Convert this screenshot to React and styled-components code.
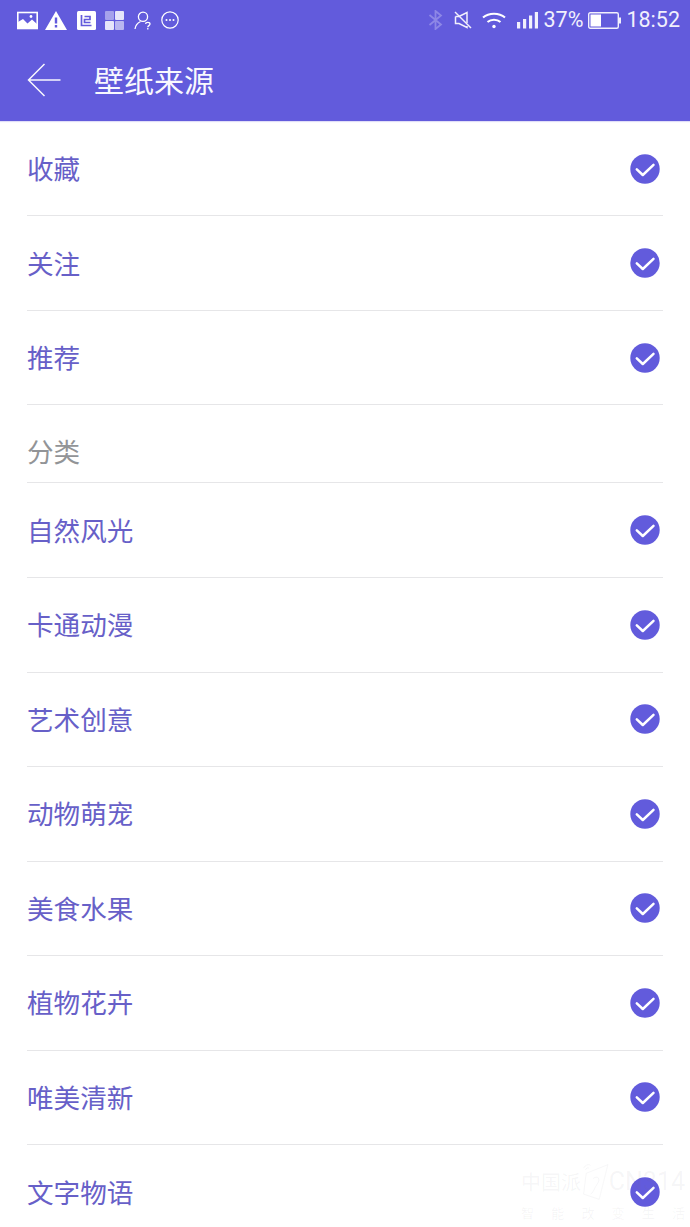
import React from "react";
import styled, { createGlobalStyle } from "styled-components";

const Global = createGlobalStyle`
  html, body { margin: 0; padding: 0; background: #fff; }
  body { font-family: "Roboto", "Noto Sans CJK SC", sans-serif; }
  #root { width: 690px; height: 1227px; overflow: hidden; }
`;
const Page = styled.div`
  position: relative;
  width: 690px;
  height: 1227px;
  overflow: hidden;
  background: #fff;
`;
const Top = styled.header`
  background: #625bdc;
  height: 121px;
  box-shadow: 0 1px 1px rgba(98, 91, 220, 0.2);
  display: flex;
  flex-direction: column;
`;
const StatusBar = styled.div`
  height: 40px;
  display: flex;
  align-items: center;
  justify-content: space-between;
  padding: 0 10px 0 17px;
  color: #fff;
`;
const StatusGroup = styled.div`
  display: flex;
  align-items: center;
  gap: ${(p) => p.$gap}px;
`;
const LeadIcon = styled.span`
  display: flex;
  margin-right: -2.5px;
`;
const NetworkIcons = styled.div`
  display: flex;
  align-items: center;
  gap: 10.5px;
  margin-right: 1px;
`;
const StatusText = styled.span`
  font-family: "Roboto", sans-serif;
  font-size: ${(p) => p.$size}px;
  line-height: 20px;
  color: #f1f0fc;
`;
const Toolbar = styled.div`
  flex: 1;
  display: flex;
  align-items: center;
  padding: 0 0 2px 27px;
  gap: 33px;
`;
const Title = styled.h1`
  margin: 0 0 2px;
  font-family: "Noto Sans CJK SC", sans-serif;
  font-size: 30px;
  font-weight: 400;
  line-height: 40px;
  color: #f8f8fe;
  letter-spacing: 0;
`;
const List = styled.div`
  padding: 0.8px 27px 0;
`;
const Row = styled.div`
  height: 94.55px;
  box-sizing: border-box;
  display: flex;
  align-items: center;
  justify-content: space-between;
  border-bottom: 1px solid #e6e6e8;
  padding-right: 3px;
`;
const RowLabel = styled.span`
  font-family: "Noto Sans CJK SC", sans-serif;
  font-size: 26.6px;
  font-weight: 400;
  color: #6760c8;
  margin-bottom: 2px;
`;
const Section = styled.div`
  height: 78px;
  box-sizing: border-box;
  display: flex;
  align-items: center;
  padding-top: 14px;
  border-bottom: 1px solid #e6e6e8;
`;
const SectionLabel = styled.span`
  font-family: "Noto Sans CJK SC", sans-serif;
  font-size: 26.6px;
  font-weight: 400;
  color: #929497;
`;
const Watermark = styled.div`
  position: absolute;
  left: 521px;
  top: 1160px;
  width: 164px;
  color: rgba(120, 120, 130, 0.07);
  font-family: "Noto Sans CJK SC", sans-serif;
  pointer-events: none;
`;
const WatermarkTop = styled.div`
  display: flex;
  align-items: center;
  font-size: 20px;
  line-height: 26px;
  white-space: nowrap;
  justify-content: space-between;
`;
const WatermarkCode = styled.span`
  font-family: "Roboto", sans-serif;
  font-size: 25px;
`;
const WatermarkBottom = styled.div`
  margin-top: 1px;
  font-size: 13px;
  line-height: 16px;
  display: flex;
  justify-content: space-between;
`;

const Check = () => (
  <svg width="30" height="30" viewBox="0 0 30 30">
    <circle cx="15" cy="15" r="14.7" fill="#625bdc" />
    <path d="M6.8 15.3 L12.8 21 L23.5 10.8" fill="none" stroke="#fff" strokeWidth="2.5" strokeLinecap="round" strokeLinejoin="round" />
  </svg>
);
const Back = () => (
  <svg width="34" height="34" viewBox="0 0 34 34">
    <path d="M17.5 1 L1.5 17 L17.5 33 M1.5 17 H33.5" fill="none" stroke="#f8f8fe" strokeWidth="1.5" />
  </svg>
);
const ImageIcon = () => (
  <svg width="21" height="19" viewBox="0 0 21 19">
    <rect x="0.8" y="1.5" width="19.4" height="16" fill="none" stroke="#fff" strokeWidth="1.6" />
    <path d="M1 17 V11 L6 8 L10.5 12.5 L15 8.5 L20 13 V17 Z" fill="#fff" />
    <circle cx="14" cy="5.5" r="1.4" fill="#fff" />
  </svg>
);
const Warn = () => (
  <svg width="22" height="19" viewBox="0 0 22 19">
    <path fillRule="evenodd" d="M11 0 L22 19 H0 Z M9.8 6.5 V12.5 H12.2 V6.5 Z M9.8 14 V16.4 H12.2 V14 Z" fill="#fff" />
  </svg>
);
const LIcon = () => (
  <svg width="19" height="19" viewBox="0 0 19 19">
    <rect width="19" height="19" rx="1.5" fill="#fff" />
    <path d="M4.5 4 V14.5 H14.5 M7.5 5.5 H13 V8.5 H7.5 V11.5 H13.5" fill="none" stroke="#625bdc" strokeWidth="1.7" />
  </svg>
);
const Tiles = () => (
  <svg width="19" height="19" viewBox="0 0 19 19">
    <rect x="0" y="0" width="9" height="9" rx="1" fill="#a5a1ec" />
    <rect x="10" y="0" width="9" height="9" rx="1" fill="#e6e5fa" />
    <rect x="0" y="10" width="9" height="9" rx="1" fill="#e6e5fa" />
    <rect x="10" y="10" width="9" height="9" rx="1" fill="#b9b6f0" />
  </svg>
);
const Person = () => (
  <svg width="18" height="19" viewBox="0 0 18 19" fill="none" stroke="#fff" strokeWidth="1.3">
    <circle cx="9" cy="5.8" r="4.6" />
    <path d="M1 18 C1.5 14 3.5 12 6.5 10.5" />
    <path d="M11.5 12.8 C11.8 10.8 16 10.8 16 13 C16 14.6 13.8 14.6 13.8 16.2" />
    <path d="M13.8 17 V18.6" />
  </svg>
);
const Dots = () => (
  <svg width="18" height="18" viewBox="0 0 18 18">
    <circle cx="9" cy="9" r="8.2" fill="none" stroke="#fff" strokeWidth="1.2" />
    <circle cx="5.5" cy="9" r="1" fill="#fff" />
    <circle cx="9" cy="9" r="1" fill="#fff" />
    <circle cx="12.5" cy="9" r="1" fill="#fff" />
  </svg>
);
const Bluetooth = () => (
  <svg width="15" height="20" viewBox="0 0 15 20">
    <path d="M1.5 5 L13 14.5 L7.5 19 V1 L13 5.5 L1.5 15" fill="none" stroke="#8d87e6" strokeWidth="1.8" />
  </svg>
);
const Mute = () => (
  <svg width="18" height="18" viewBox="0 0 18 18" fill="none" stroke="#f1f0fc" strokeWidth="1.5">
    <path d="M1.5 5.5 H5 L13 1.5 V12" />
    <path d="M1.5 5.5 V12.5 H5 L13 16.5 V15" />
    <path d="M1 1 L17 17" />
  </svg>
);
const Wifi = () => (
  <svg width="24" height="17" viewBox="0 0 24 17" fill="none" stroke="#fff" strokeWidth="2.1">
    <path d="M1 5.5 C7 0.5 17 0.5 23 5.5" />
    <path d="M5.5 10 C9 7 15 7 18.5 10" />
    <circle cx="12" cy="14.5" r="1.7" fill="#fff" stroke="none" />
  </svg>
);
const Signal = () => (
  <svg width="21" height="17" viewBox="0 0 21 17" fill="#f1f0fc">
    <rect x="0" y="10" width="3.2" height="6.5" />
    <rect x="6" y="7" width="3.2" height="9.5" />
    <rect x="12" y="3.5" width="3.2" height="13" />
    <rect x="17.8" y="0" width="3.2" height="16.5" />
  </svg>
);
const Battery = () => (
  <svg width="33" height="17" viewBox="0 0 33 17">
    <rect x="0.7" y="0.7" width="29.6" height="15.6" rx="1.5" fill="none" stroke="#f1f0fc" strokeWidth="1.4" />
    <rect x="2.5" y="2.5" width="10.5" height="12" fill="#fff" />
    <rect x="31" y="5.5" width="2" height="6" fill="#f1f0fc" />
  </svg>
);
const WatermarkLogo = () => (
  <svg width="32" height="44" viewBox="0 0 32 44" fill="none" stroke="currentColor" strokeWidth="1">
    <path d="M6 12 L31 2 L21 42 L3 36 Z" />
    <path d="M14 18 C19 14 23 18 19 24 C15 29 15 34 11 36" />
    <path d="M3 6 C5 2 9 1 11 3 M5 8 C6 6 8 5 9 6" />
  </svg>
);

const top3 = ["收藏", "关注", "推荐"];
const cats = ["自然风光", "卡通动漫", "艺术创意", "动物萌宠", "美食水果", "植物花卉", "唯美清新", "文字物语"];

export default function App() {
  return (
    <Page>
      <Global />
      <Top>
        <StatusBar>
          <StatusGroup $gap={9.5}>
            <LeadIcon>
              <ImageIcon />
            </LeadIcon>
            <Warn />
            <LIcon />
            <Tiles />
            <Person />
            <Dots />
          </StatusGroup>
          <StatusGroup $gap={5}>
            <NetworkIcons>
              <Bluetooth />
              <Mute />
              <Wifi />
              <Signal />
            </NetworkIcons>
            <StatusText $size={21.5}>37%</StatusText>
            <Battery />
            <StatusText $size={21.5}>18:52</StatusText>
          </StatusGroup>
        </StatusBar>
        <Toolbar>
          <Back />
          <Title>壁纸来源</Title>
        </Toolbar>
      </Top>
      <List>
        {top3.map((t) => (
          <Row key={t}>
            <RowLabel>{t}</RowLabel>
            <Check />
          </Row>
        ))}
        <Section>
          <SectionLabel>分类</SectionLabel>
        </Section>
        {cats.map((t) => (
          <Row key={t}>
            <RowLabel>{t}</RowLabel>
            <Check />
          </Row>
        ))}
      </List>
      <Watermark>
        <WatermarkTop>
          <span>中国派</span>
          <WatermarkLogo />
          <WatermarkCode>CN314</WatermarkCode>
        </WatermarkTop>
        <WatermarkBottom>
          {"智能改变生活".split("").map((c) => (
            <span key={c}>{c}</span>
          ))}
        </WatermarkBottom>
      </Watermark>
    </Page>
  );
}
